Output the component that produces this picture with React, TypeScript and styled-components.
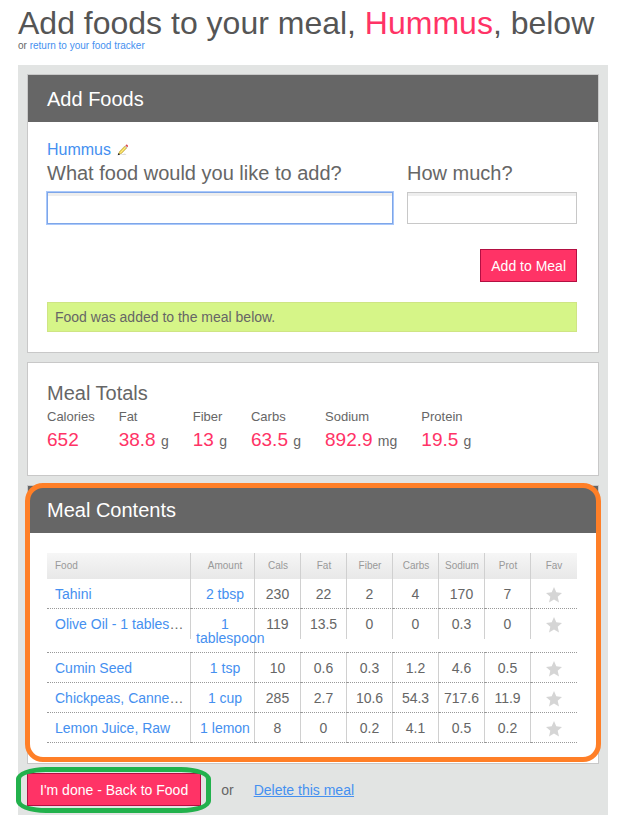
import React from "react";
import styled, { createGlobalStyle } from "styled-components";

const PINK = "#ff3366";
const LINK = "#4590f0";

const GlobalStyle = createGlobalStyle`
  *, *::before, *::after { box-sizing: border-box; }
  body {
    margin: 0;
    background: #fff;
    color: #666;
    font-family: "Liberation Sans", Arial, Helvetica, sans-serif;
    font-size: 14px;
    line-height: 16px;
  }
  button, input { font: inherit; }
`;

const Page = styled.main`
  padding: 4px 16px 6px 18px;
`;

const Title = styled.h1`
  margin: 0;
  color: #555;
  font-size: 32px;
  font-weight: 400;
  line-height: 38px;
`;

const Accent = styled.span`
  color: ${PINK};
`;

const Link = styled.a<{ $underline?: boolean }>`
  color: ${LINK};
  text-decoration: ${(p) => (p.$underline ? "underline" : "none")};
`;

const Subtitle = styled.p`
  margin: 0;
  font-size: 10px;
  line-height: 8px;
`;

const Board = styled.div`
  display: flex;
  flex-direction: column;
  gap: 9px;
  margin-top: 15px;
  padding: 9px;
  background: #e2e4e3;
`;

const Card = styled.section`
  position: relative;
  border: 1px solid #c8c8c8;
  background: #fff;
`;

const CardHeader = styled.h2`
  margin: 0;
  padding: 12px 19px 11px;
  background: #666;
  color: #fff;
  font-size: 20px;
  font-weight: 400;
  line-height: 24px;
`;

const CardBody = styled.div`
  padding: 18px 21px 20px 19px;
`;

const MealName = styled.div`
  display: flex;
  align-items: center;
  gap: 6px;
  font-size: 16px;
  line-height: 20px;
`;

const IconButton = styled.button`
  display: inline-flex;
  padding: 0;
  border: 0;
  background: none;
  cursor: pointer;
`;

const Fields = styled.div`
  display: grid;
  grid-template-columns: 346fr 170fr;
  gap: 14px;
`;

const Field = styled.label`
  display: flex;
  flex-direction: column;
  gap: 6px;
  font-size: 20px;
  line-height: 26px;
`;

const TextInput = styled.input<{ $active?: boolean }>`
  width: 100%;
  height: 32px;
  padding: 4px 8px;
  border: 1px solid ${(p) => (p.$active ? "#7ea6e8" : "#c8c8c8")};
  border-radius: 0;
  outline: none;
  font-size: 14px;
  box-shadow: inset 0 3px 0 #eee${(p) => (p.$active ? ", 0 0 0 1px #a9c8fb" : "")};
`;

const Actions = styled.div`
  display: flex;
  justify-content: flex-end;
  margin: 25px 0 20px;
`;

const PrimaryButton = styled.button<{ $wide?: boolean }>`
  height: 33px;
  padding: 0 ${(p) => (p.$wide ? 12 : 10)}px;
  border: 1px solid #b30f42;
  background: ${PINK};
  color: #fff;
  cursor: pointer;
`;

const Notice = styled.div`
  padding: 6px 7px;
  border: 1px solid #cfe584;
  background: #d6f588;
`;

const Totals = styled.div`
  padding: 18px 19px 23px;
`;

const TotalsTitle = styled.h3`
  margin: 0;
  font-size: 20px;
  font-weight: 400;
  line-height: 24px;
`;

const TotalList = styled.dl`
  display: flex;
  gap: 24px;
  margin: 0;
`;

const Total = styled.div`
  dt { font-size: 13px; line-height: 24px; }
  dd { margin: 0; line-height: 22px; white-space: nowrap; }
`;

const TotalValue = styled.span`
  color: ${PINK};
  font-size: 19px;
`;

const Table = styled.table`
  width: 100%;
  table-layout: fixed;
  border-collapse: separate;
  border-spacing: 0;
  text-align: center;
`;

const Column = styled.col<{ $width?: number }>`
  width: ${(p) => (p.$width ? `${p.$width}px` : "auto")};
`;

const HeadCell = styled.th<{ $left?: boolean }>`
  height: 26px;
  padding: ${(p) => (p.$left ? "0 8px" : "0")};
  background:
    linear-gradient(#d0d0d0, #d0d0d0) right top / 1px 100% no-repeat,
    linear-gradient(#f6f6f6, #e8e8e8);
  color: #999;
  font-size: 10px;
  font-weight: 400;
  text-align: ${(p) => (p.$left ? "left" : "center")};
  &:nth-child(2) { padding-left: 4px; }
  &:last-child { background: linear-gradient(#f6f6f6, #e8e8e8); }
`;

const Cell = styled.td<{ $fullRule?: boolean }>`
  padding: 8px 1px 7px 0;
  border-bottom: 1px dotted #999;
  background: linear-gradient(#d0d0d0, #d0d0d0) right top / 1px ${(p) => (p.$fullRule ? "100%" : "30px")} no-repeat;
  line-height: 14px;
  vertical-align: top;
  &:last-child { background: none; }
`;

const FoodCell = styled(Cell)`
  padding-left: 8px;
  padding-right: 4px;
  overflow: hidden;
  text-align: left;
  text-overflow: ellipsis;
  white-space: nowrap;
`;

const AmountCell = styled(Cell)`
  padding-left: 5px;
`;

const StarCell = styled(Cell)`
  padding: 0 1px 0 0;
  ${IconButton} { margin-top: 8px; }
`;

const ContentsBody = styled.div`
  padding: 20px 21px 20px 19px;
`;

const CardHighlight = styled.div`
  position: absolute;
  inset: -3px -3px 1px;
  border: 5px solid #ff7f27;
  border-radius: 18px;
  pointer-events: none;
`;

const Footer = styled.footer`
  display: flex;
  align-items: center;
  gap: 20px;
`;

const Highlighted = styled.div`
  position: relative;
  display: flex;
`;

const ButtonHighlight = styled.div`
  position: absolute;
  inset: -6px -10px -7px -11px;
  border: 5px solid #22b14c;
  border-radius: 30px / 12px;
  pointer-events: none;
`;

const Pencil = () => (
  <svg width="12" height="12" viewBox="0 0 12 12" aria-hidden="true">
    <path d="M2.5 11h7L8 9.5z" fill="#ddd" />
    <path d="M1.5 10.5 2.5 7.5 7.8 2l2 2-5.3 5.5z" fill="#ecd04a" stroke="#b39b4a" strokeWidth=".5" />
    <path d="M3.4 8.8 8.8 3" stroke="#fff3a0" strokeWidth=".8" />
    <path d="m7.6 2.2.8-.8 2 2-.8.8z" fill="#bbb" />
    <path d="m8.5 1.4.8-.8q1.6-.2 1.8 1.7l-.8.9z" fill="#e04b4b" />
    <path d="m.7 11.3.8-2.3 1.6 1.5z" fill="#222" />
  </svg>
);

const Star = () => (
  <svg width="16" height="16" viewBox="0 0 16 16" aria-hidden="true">
    <path d="M8 0 10.3 5.3 16 5.9 11.7 9.7 13 15.6 8 12.6 3 15.6 4.3 9.7 0 5.9 5.7 5.3z" fill="#d5d5d5" />
  </svg>
);

const totals = [
  { label: "Calories", value: "652", unit: "" },
  { label: "Fat", value: "38.8", unit: "g" },
  { label: "Fiber", value: "13", unit: "g" },
  { label: "Carbs", value: "63.5", unit: "g" },
  { label: "Sodium", value: "892.9", unit: "mg" },
  { label: "Protein", value: "19.5", unit: "g" },
];

const headings = ["Food", "Amount", "Cals", "Fat", "Fiber", "Carbs", "Sodium", "Prot", "Fav"];

const foods = [
  { name: "Tahini", more: "", amount: "2 tbsp", facts: ["230", "22", "2", "4", "170", "7"] },
  { name: "Olive Oil - 1 tables", more: "…", amount: "1 tablespoon", facts: ["119", "13.5", "0", "0", "0.3", "0"] },
  { name: "Cumin Seed", more: "", amount: "1 tsp", facts: ["10", "0.6", "0.3", "1.2", "4.6", "0.5"] },
  { name: "Chickpeas, Canne", more: "…", amount: "1 cup", facts: ["285", "2.7", "10.6", "54.3", "717.6", "11.9"] },
  { name: "Lemon Juice, Raw", more: "", amount: "1 lemon", facts: ["8", "0", "0.2", "4.1", "0.5", "0.2"] },
];

export default function App() {
  return (
    <>
      <GlobalStyle />
      <Page>
        <Title>
          Add foods to your meal, <Accent>Hummus</Accent>, below
        </Title>
        <Subtitle>
          or <Link href="#tracker">return to your food tracker</Link>
        </Subtitle>
        <Board>
          <Card>
            <CardHeader>Add Foods</CardHeader>
            <CardBody>
              <MealName>
                <Link href="#meal">Hummus</Link>
                <IconButton type="button" aria-label="Rename meal">
                  <Pencil />
                </IconButton>
              </MealName>
              <Fields>
                <Field>
                  What food would you like to add?
                  <TextInput type="text" name="food" $active />
                </Field>
                <Field>
                  How much?
                  <TextInput type="text" name="amount" />
                </Field>
              </Fields>
              <Actions>
                <PrimaryButton type="button">Add to Meal</PrimaryButton>
              </Actions>
              <Notice role="status">Food was added to the meal below.</Notice>
            </CardBody>
          </Card>
          <Card>
            <Totals>
              <TotalsTitle>Meal Totals</TotalsTitle>
              <TotalList>
                {totals.map((t) => (
                  <Total key={t.label}>
                    <dt>{t.label}</dt>
                    <dd>
                      <TotalValue>{t.value} </TotalValue>
                      {t.unit}
                    </dd>
                  </Total>
                ))}
              </TotalList>
            </Totals>
          </Card>
          <Card>
            <CardHeader>Meal Contents</CardHeader>
            <ContentsBody>
              <Table>
                <colgroup>
                  {headings.map((h, i) => (
                    <Column key={h} $width={i === 0 ? undefined : i === 1 ? 64 : 46} />
                  ))}
                </colgroup>
                <thead>
                  <tr>
                    {headings.map((h, i) => (
                      <HeadCell key={h} scope="col" $left={i === 0}>
                        {h}
                      </HeadCell>
                    ))}
                  </tr>
                </thead>
                <tbody>
                  {foods.map((f) => (
                    <tr key={f.name}>
                      <FoodCell>
                        <Link href="#food">{f.name}</Link>
                        {f.more}
                      </FoodCell>
                      <AmountCell $fullRule>
                        <Link href="#amount">{f.amount}</Link>
                      </AmountCell>
                      {f.facts.map((v, i) => (
                        <Cell key={i}>{v}</Cell>
                      ))}
                      <StarCell>
                        <IconButton type="button" aria-label={`Favorite ${f.name}`}>
                          <Star />
                        </IconButton>
                      </StarCell>
                    </tr>
                  ))}
                </tbody>
              </Table>
            </ContentsBody>
            <CardHighlight />
          </Card>
          <Footer>
            <Highlighted>
              <PrimaryButton type="button" $wide>
                I'm done - Back to Food
              </PrimaryButton>
              <ButtonHighlight />
            </Highlighted>
            <span>or</span>
            <Link href="#delete" $underline>
              Delete this meal
            </Link>
          </Footer>
        </Board>
      </Page>
    </>
  );
}
